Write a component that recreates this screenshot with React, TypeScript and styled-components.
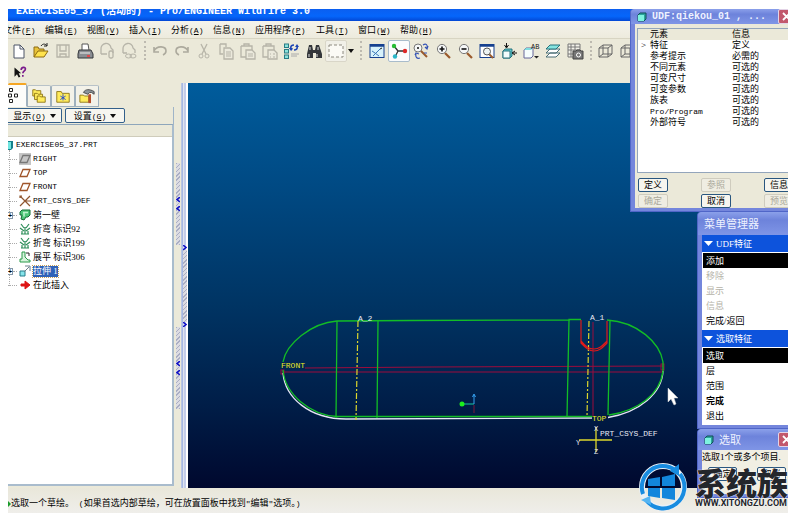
import React from "react";
import styled, { createGlobalStyle, css } from "styled-components";

const Global = createGlobalStyle`
  * { box-sizing: border-box; }
  body { margin: 0; background: #fff; overflow: hidden; }
  button { font: inherit; color: inherit; border: 0; background: none; padding: 0; margin: 0; }
  ul { list-style: none; margin: 0; padding: 0; }
  h2, h3, p { margin: 0; font-size: inherit; font-weight: inherit; }
`;

const latin = `"Liberation Mono", "Noto Sans CJK SC", monospace`;
const cjk = `"Liberation Serif", "Noto Sans CJK SC", serif`;

const Page = styled.div`
  height: 100vh;
  padding: 9px 0 2px 8px;
  overflow: hidden;
`;
const Shell = styled.div`
  position: relative;
  height: 100%;
  display: flex;
  flex-direction: column;
  overflow: hidden;
  background: #ebe9d9;
  color: #000;
  font: 9px/14px ${cjk};
  white-space: nowrap;
`;
const Mono = styled.span`
  font: 8px/1 ${latin};
`;

/* ---------- title, menus, toolbars ---------- */
const TitleBar = styled.header`
  flex: none;
  height: 12px;
  padding-left: 8px;
  overflow: hidden;
  background: linear-gradient(#0b5ff0, #0566fb 60%, #0347d4);
  color: #fff;
  font: bold 10px/6px ${latin};
`;
const MenuBar = styled.nav`
  flex: none;
  display: flex;
  height: 18px;
  margin-left: -5px;
  background: linear-gradient(#f4f3ec, #edebdd);
  border-bottom: 1px solid #d8d5c3;
`;
const MenuItem = styled.button<{ $wide?: boolean }>`
  min-width: ${(p) => (p.$wide ? 61 : 42)}px;
  text-align: left;
  line-height: 16px;
`;
const Toolbar = styled.div`
  flex: none;
  display: flex;
  align-items: center;
  height: 23px;
  overflow: hidden;
`;
const HelpBar = styled(Toolbar)`
  height: 21px;
`;
const Tool = styled.button<{ $on?: boolean; $soft?: boolean }>`
  flex: none;
  display: grid;
  place-items: center;
  width: 22px;
  height: 22px;
  border-radius: 2px;
  ${(p) => p.$on && css`background: #fbfcfd; border: 1px solid #a9bccb;`}
  ${(p) => p.$soft && css`background: #f1f0e8; border: 1px solid #d9d6c8;`}
  &:disabled { opacity: 0.75; }
`;
const Caret = styled.button`
  flex: none;
  width: 8px;
  height: 22px;
  display: grid;
  place-items: center;
`;
const Separator = styled.i<{ $w: number }>`
  flex: none;
  width: ${(p) => p.$w}px;
  height: 19px;
  display: flex;
  justify-content: center;
  &::before { content: ""; border-left: 2px dotted #bdbab0; }
`;

/* ---------- body ---------- */
const Body = styled.main`
  flex: 1;
  min-height: 0;
  display: flex;
`;
const Side = styled.aside`
  flex: none;
  width: 166px;
  display: flex;
  flex-direction: column;
  padding-bottom: 2px;
`;
const Tabs = styled.div`
  flex: none;
  display: flex;
  height: 24px;
`;
const Tab = styled.button<{ $on?: boolean }>`
  width: ${(p) => (p.$on ? 19 : 24)}px;
  margin-top: ${(p) => (p.$on ? 0 : 2)}px;
  display: grid;
  place-items: center;
  background: ${(p) => (p.$on ? "#fcfcfa" : "#f3f2e9")};
  border: 1px solid #9fb0bd;
  border-left-width: ${(p) => (p.$on ? 0 : 1)}px;
  border-top: ${(p) => (p.$on ? "2px solid #f5a623" : "1px solid #b8c2c8")};
  border-bottom-color: ${(p) => (p.$on ? "#fcfcfa" : "#9fb0bd")};
  border-radius: 2px 2px 0 0;
`;
const TreeTools = styled.div`
  flex: none;
  display: flex;
  gap: 3px;
  height: 17px;
  padding-top: 1px;
  border-right: 1px solid #9fb4c8;
`;
const DropButton = styled.button<{ $first?: boolean }>`
  display: flex;
  align-items: center;
  justify-content: center;
  gap: 4px;
  width: ${(p) => (p.$first ? 54 : 60)}px;
  height: 15px;
  background: #f7f6f0;
  border: 1px solid #33608b;
  border-left-width: ${(p) => (p.$first ? 0 : 1)}px;
  border-radius: ${(p) => (p.$first ? "0 2px 2px 0" : "2px")};
`;
const TreePane = styled.section`
  flex: 1;
  min-height: 0;
  background: #fff;
  border: 1px solid #8ea6bb;
  border-left: 0;
  border-right: 2px solid #a9bccd;
  border-bottom: 2px solid #a9bccd;
`;
const TreeHead = styled.div`
  height: 12px;
  background: #ebe9d9;
  border-bottom: 1px solid #cfccbb;
  margin-bottom: 1px;
`;
const TreeList = styled.ul`
  position: relative;
  &::before {
    content: "";
    position: absolute;
    left: 1px;
    top: 12px;
    bottom: 6px;
    border-left: 1px dotted #aaa;
  }
`;
const TreeRow = styled.li`
  position: relative;
  height: 14px;
  display: flex;
  align-items: center;
  gap: 2px;
  > svg { flex: none; }
`;
const Branch = styled.span`
  width: 9px;
  display: flex;
  align-items: center;
  &::after { content: ""; flex: 1; border-top: 1px dotted #aaa; }
`;
const Plus = styled.button`
  width: 5px;
  height: 7px;
  border: 1px solid #8496a8;
  border-left: 0;
  background: #fff;
  font: bold 7px/5px "Liberation Sans", sans-serif;
`;
const Name = styled.span<{ $sel?: boolean }>`
  line-height: 11px;
  ${(p) => p.$sel && css`background: #2f62b8; color: #fff; outline: 1px dotted #c7a05a;`}
`;

const Sash = styled.div`
  flex: none;
  display: flex;
  width: 14px;
`;
const SashCol = styled.div<{ $inner?: boolean }>`
  width: ${(p) => (p.$inner ? 6 : 8)}px;
  display: flex;
  flex-direction: column;
  align-items: center;
  padding-top: ${(p) => (p.$inner ? 162 : 80)}px;
  gap: ${(p) => (p.$inner ? 0 : 82)}px;
  ${(p) =>
    p.$inner
      ? css`background: linear-gradient(90deg, #a6b8e2 1px, #dfe3ee 1px 2px, #c3cdea 2px 4px, #fff 4px);`
      : css`border-right: 1px solid #b9c6e2;`}
`;
const Grip = styled.div<{ $h: number }>`
  flex: none;
  width: 4px;
  height: ${(p) => p.$h}px;
  display: flex;
  flex-direction: column;
  align-items: center;
  justify-content: center;
  gap: 4px;
  background: repeating-linear-gradient(135deg, #aaaec4 0 1px, #dcdce2 1px 3px);
`;

const Canvas = styled.section`
  flex: 1;
  min-width: 0;
  background: linear-gradient(#005c9c, #004a84 25%, #003463 55%, #001d47 80%, #00082e);
  > svg { display: block; width: 100%; height: 100%; }
`;
const Status = styled.footer`
  flex: none;
  height: 25px;
  padding-top: 8px;
  display: flex;
  align-items: flex-start;
  background: linear-gradient(#e9e7da, #efeeea);
  line-height: 15px;
`;

/* ---------- floating windows ---------- */
const Float = styled.div`
  position: absolute;
  top: 0;
  right: -10px;
  display: flex;
  flex-direction: column;
  align-items: flex-end;
`;
const Dialog = styled.section<{ $w: number }>`
  width: ${(p) => p.$w}px;
  padding: 0 4px 3px;
  background: #7486dc;
  border-left: 1px solid #5066c8;
  border-bottom: 1px solid #5066c8;
  border-radius: 4px 4px 0 0;
`;
const DialogTitle = styled.h2<{ $h: number; $mono?: boolean }>`
  display: flex;
  align-items: center;
  gap: 5px;
  height: ${(p) => p.$h}px;
  margin: 0 -4px;
  padding: 0 3px 0 6px;
  background: linear-gradient(#8ba0ea, #6d83db 35%, #7f95e6);
  border-radius: 4px 4px 0 0;
  color: #eef2ff;
  font: ${(p) => (p.$mono ? `bold 10px/10px ${latin}` : `11px/14px ${cjk}`)};
  > svg { flex: none; }
`;
const Close = styled.button`
  margin-left: auto;
  width: 17px;
  height: 15px;
  display: grid;
  place-items: center;
  background: #c2586c;
  border: 1px solid #e3d3e6;
  border-radius: 2px;
`;
const Face = styled.div`
  background: #ebe9d9;
  padding: 4px 0 0 2px;
`;
const ElementBox = styled.div`
  height: 145px;
  background: #fff;
  border: 1px solid #93a5bb;
`;
const ElementTable = styled.table`
  width: 100%;
  border-collapse: collapse;
  line-height: 11px;
  th { background: #ebe9d9; font-weight: normal; text-align: left; padding: 0; }
  td { padding: 0; }
  th:first-child, td:first-child { width: 12px; padding-left: 3px; }
  th:nth-child(2), td:nth-child(2) { width: 82px; }
`;
const ButtonGrid = styled.div`
  display: grid;
  grid-template-columns: repeat(3, 30px);
  justify-content: space-between;
  gap: 2px 0;
  padding: 5px 0 0 1px;
`;
const Push = styled.button`
  height: 14px;
  border: 1px solid #29567f;
  border-radius: 2px;
  background: #f6f5ef;
  line-height: 12px;
  &:disabled { color: #aaa89a; border-color: #cfccbe; background: #efede2; }
`;
const MenuHead = styled.h3`
  display: flex;
  align-items: center;
  gap: 3px;
  height: 17px;
  padding-left: 2px;
  background: #0d53dc;
  color: #fff;
`;
const MenuList = styled.ul`
  background: #fff;
  padding: 1px 0 2px 1px;
`;
const MenuEntry = styled.button<{ $sel?: boolean; $bold?: boolean }>`
  display: block;
  width: 100%;
  height: 15px;
  padding-left: 3px;
  text-align: left;
  line-height: 14px;
  font-weight: ${(p) => (p.$bold ? "bold" : "normal")};
  ${(p) => p.$sel && css`background: #000; color: #fff;`}
  &:disabled { color: #b5b3a8; }
`;
const SelectFace = styled.div`
  height: 44px;
  background: #f1efe3;
`;
const SelectButtons = styled.div`
  display: grid;
  grid-template-columns: 29px 29px;
  gap: 20px;
  padding: 3px 6px;
`;
const Brand = styled.a`
  position: absolute;
  right: 0;
  bottom: 1px;
  display: flex;
  align-items: flex-end;
  gap: 8px;
  color: #24262b;
  text-decoration: none;
  text-shadow: 0 0 1px #fff, 0 0 1px #fff;
`;
const BrandText = styled.span`
  display: flex;
  flex-direction: column;
  padding-bottom: 4px;
  font: bold 9px/10px Roboto, sans-serif;
`;
const BrandName = styled.span`
  font: 900 31px/32px "Noto Sans CJK SC", sans-serif;
`;

/* ---------- drawings ---------- */
const S = ({ children, s = 18, v = 18 }: { children: React.ReactNode; s?: number; v?: number }) => (
  <svg width={s} height={s} viewBox={`0 0 ${v} ${v}`} fill="none" aria-hidden="true">{children}</svg>
);
const g = "#a5a398";
const Glass = ({ sign }: { sign: string }) => (
  <S>
    <path d="M11 11l5 5" stroke="#9a5a2c" strokeWidth="2.2" />
    <circle cx="8" cy="7" r="4.6" fill="#f5f7f7" stroke="#777" />
    <path d={sign} stroke="#111" strokeWidth="1.6" />
  </S>
);
const Sheets = () => (
  <S>
    <path d="M3 2h6v3M3 2v10h3" stroke={g} strokeWidth="1.300" />
    <path d="M7 6h6l3 3v8H7z" fill="#eceade" stroke={g} strokeWidth="1.300" />
    <path d="M9 10h5M9 12h5M9 14h5" stroke={g} />
  </S>
);
const Paste = ({ x }: { x?: boolean }) => (
  <S>
    <path d="M2 4h11v4M2 4v11h5M5 4V2h5v2" stroke={g} strokeWidth="1.300" />
    <path d="M7 8h6l3 3v6H7z" fill="#eceade" stroke={g} strokeWidth="1.300" />
    <path d={x ? "M9 12h1m2 0h2M9 15h1m2 0h2" : "M9 12h5M9 14h5"} stroke={g} />
  </S>
);
const Icons: Record<string, React.ReactNode> = {
  new: <S><path d="M4 3h6l4 4v9H4z" fill="#fff" stroke="#4c5566" /><path d="M10 3v4h4" stroke="#4c5566" /></S>,
  open: <S><path d="M2 15V5h4l1 2h5v3" fill="#e8c23a" stroke="#8c6b12" /><path d="M2 15l4-6h10l-4 6z" fill="#ffe34d" stroke="#8c6b12" /><path d="M9 4c2-3 5-2 6 0m0-3v3h-3" stroke="#222" /></S>,
  save: <S><path d="M3 3h12v12H3z" stroke={g} strokeWidth="1.300" /><path d="M6 3v6h6V3M6 15v-3h6v3" stroke={g} strokeWidth="1.300" /></S>,
  print: <S><path d="M6 8V2h6l1 6" fill="#fff" stroke="#555" /><path d="M3 8h12l2 4v4H2v-4z" fill="#8a8d92" stroke="#33363b" /><path d="M4 11h10" stroke="#eee" /><path d="M11 14h3" stroke="#f33" strokeWidth="1.5" /></S>,
  mail: <S><path d="M3 12V7a5 5 0 0110-1l2 2v3M3 12h6" stroke={g} strokeWidth="1.300" /><rect x="11" y="9" width="4" height="7" rx="1.5" stroke={g} strokeWidth="1.300" /></S>,
  link: <S><path d="M3 11V7a5 5 0 0110-1l2 2v3M3 11h4" stroke={g} strokeWidth="1.300" /><ellipse cx="8.500" cy="14" rx="3" ry="2" stroke={g} /><ellipse cx="13" cy="14" rx="3" ry="2" stroke={g} /></S>,
  undo: <S><path d="M3 5v5h5M3 9c3-6 12-5 12 0 0 2-1 3-3 4" stroke="#98958a" strokeWidth="1.6" /></S>,
  redo: <S><path d="M15 5v5h-5M15 9c-3-6-12-5-12 0 0 2 1 3 3 4" stroke="#98958a" strokeWidth="1.6" /></S>,
  cut: <S><path d="M6 2l5 10M12 2L7 12" stroke={g} strokeWidth="1.3" /><circle cx="6" cy="14" r="2" stroke={g} /><circle cx="12" cy="14" r="2" stroke={g} /></S>,
  copy: <Sheets />,
  paste: <Paste />,
  special: <Paste x />,
  regen: <S><g fill="#8be3dc" stroke="#2a7b84"><rect x="1.500" y="2" width="4" height="3.500" /><rect x="1.500" y="7.500" width="4" height="3.500" /><rect x="1.500" y="13" width="4" height="3.500" /></g><path d="M8 7c-1-3 1-4 3-4M9 8L7 6m2-3" stroke="#1d45b4" strokeWidth="1.600" /><path d="M6 6h4L8 9zM12 5h4l-2-3z" fill="#1d45b4" /><path d="M14 4c1 3-1 4-3 4" stroke="#1d45b4" strokeWidth="1.600" /><path d="M8 12h8M8 14h6" stroke="#aaa" /></S>,
  find: <S><path d="M4 3h3l1 5h2l1-5h3l3 9v4h-6v-5H8v5H2v-4z" fill="#33363a" /><path d="M4 12v3m8-3v3M5 5v3m8-3v3" stroke="#ddd" /></S>,
  select: <S><rect x="2" y="3" width="14" height="12" fill="#fbfaf5" stroke="#8d8a80" strokeDasharray="3 2" /></S>,
  sketch: <S><rect x="2" y="2.500" width="14" height="13" fill="#d7f2fb" stroke="#16408f" /><path d="M2 3.500h14" stroke="#16408f" strokeWidth="2.500" /><path d="M5 14l7-7M4 9l3 2 4 3" stroke="#3b77b8" /><path d="M12 7l2-1" stroke="#222" /></S>,
  spin: <S><path d="M4 4l4 5h8M8 9l-3 6" stroke="#333" strokeWidth="1.300" /><circle cx="4" cy="4" r="2.200" fill="#27bd35" /><circle cx="15" cy="9" r="2.200" fill="#dd2828" /><circle cx="5" cy="14.500" r="2.200" fill="#2bb7c8" /></S>,
  orient: <S><circle cx="6" cy="6" r="4" fill="#f5f7f7" stroke="#777" /><path d="M9 9l6 6" stroke="#9a5a2c" strokeWidth="2" /><path d="M11 3c3-2 5 0 4 3m-2-1l2 2 1-3M4 12c-1 3 1 5 4 4m-5-3l1-2 3 1M12 11h3" stroke="#3352b5" strokeWidth="1.200" /><path d="M5 6h2M6 5v2" stroke="#111" /></S>,
  zin: <Glass sign="M5.500 7h5M8 4.500v5" />,
  zout: <Glass sign="M5.500 7h5" />,
  refit: <S><rect x="2" y="2.500" width="14" height="13" fill="#fff" stroke="#16408f" /><path d="M2 3.500h14" stroke="#16408f" strokeWidth="2.500" /><path d="M11 12l4 4" stroke="#9a5a2c" strokeWidth="2" /><circle cx="9" cy="9.500" r="3.500" fill="#eef4f4" stroke="#555" /></S>,
  views: <S><path d="M3 9l2-2h7v7l-2 2H3z" fill="#5ec6cc" stroke="#26727c" /><path d="M3 9h7v7H3z" fill="#f2fcfc" stroke="#26727c" /><path d="M6.500 1v4M4.500 3l2 3 2-3M17 11h-4m2-2l-3 2 3 2" stroke="#111" /></S>,
  named: <S><path d="M2 8l2-2h7v8l-2 2H2z" fill="#f5fdfd" stroke="#669" /><path d="M2 8l2-2h7l-2 2z" fill="#7fdde0" /><text x="9" y="7" fontSize="7" fontFamily="Liberation Mono, monospace" fill="#222">AB</text><path d="M12 14h5l-2.500 2.500z" fill="#222" /></S>,
  layers: <S><path d="M2 15l4-4h10l-4 4zM2 11l4-4h10l-4 4z" fill="#fff" stroke="#4b6f77" /><path d="M2 7l4-4h10l-4 4z" fill="#84e4e0" stroke="#26727c" /></S>,
  table: <S><path d="M2 2h12v13H2zM5 2v13M9 2v6M2 5h12M2 8h12M2 12h5" fill="#f3f2ea" stroke="#777" /><path d="M7 9h3l1-1h3l1 1h2v8H7z" fill="#777" stroke="#444" /><circle cx="12.500" cy="13" r="2" stroke="#fff" /></S>,
  wire: <S><path d="M2 6h9v9H2zM6 3h9v9H6zM2 6l4-3M11 6l4-3M11 15l4-3M2 15l4-3" stroke="#666" /></S>,
};
const Arrow = ({ c = "#111", big }: { c?: string; big?: boolean }) => (
  <svg width={big ? 9 : 6} height={big ? 5 : 4} viewBox="0 0 6 4" preserveAspectRatio="none" aria-hidden="true"><path d="M0 0h6L3 4z" fill={c} /></svg>
);
const Chevron = ({ right }: { right?: boolean }) => (
  <svg width="4" height="5" viewBox="0 0 4 5" fill="none" aria-hidden="true">
    <path d={right ? "M0 0l3 2.500-3 2.500" : "M4 0L1 2.500 4 5"} stroke="#1010c8" strokeWidth="1.500" />
  </svg>
);
const WinIcon = () => (
  <S s={10} v={10}><path d="M1 3l2-2h6v6L7 9H1z" fill="#2ca59d" stroke="#124f58" /><path d="M1 3h6v6H1z" fill="#7df2df" /></S>
);
const Cross = () => <S s={9} v={9}><path d="M1 1l7 7M8 1L1 8" stroke="#fff" strokeWidth="1.800" /></S>;
const Folder = ({ x = 0, y = 0 }) => (
  <path transform={`translate(${x} ${y})`} d="M0 8V1h3l1 1h5v6z" fill="#ffec5c" stroke="#8c7414" />
);
const plane = (c: string, bg?: string) => (
  <S s={12} v={12}>{bg && <path d="M0 0h12v12H0z" fill={bg} />}<path d="M4 2.500h7L8 9.500H1z" stroke={c} strokeWidth="1.300" /></S>
);
const bend = (
  <S s={12} v={12}><path d="M2 1l3 4M10 1L7 5M1 5l4 3M11 5L7 8M6 4v7M2 11h8M3 8v3M9 8v3" stroke="#2f8f5b" strokeWidth="1.200" /></S>
);
const TI: Record<string, React.ReactNode> = {
  datumSel: plane("#777", "#c5c5c5"),
  datum: plane("#a0552a"),
  csys: <S s={12} v={12}><path d="M1 1l10 10M11 1L1 11M6 6h6M1 3V1h2" stroke="#8f5630" strokeWidth="1.200" /></S>,
  wall: <S s={12} v={12}><path d="M1 3l2-2h8v5L9 8H7l-2 3-3-1 1-4H1z" fill="#4fc878" stroke="#186c38" /><path d="M4 3.500h5M5 3.500v4" stroke="#bff2cd" strokeWidth="1.500" /></S>,
  bend,
  flat: <S s={12} v={12}><path d="M3 1h3v5l3 3h2v2H1V8h2z" fill="#d6f3dc" stroke="#2b9a4a" /><path d="M7 2h3v3" stroke="#222" /></S>,
  extrude: <S s={12} v={12}><path d="M1 6h5v5H1z" fill="#86e4ea" stroke="#267e8c" /><path d="M5 7l5-5M6 1h5v5" stroke="#6b7f8b" /></S>,
  insert: <S s={12} v={12}><path d="M2 5h4V2l5 4-5 4V7H2z" fill="#dd1515" stroke="#dd1515" /></S>,
};

/* ---------- data ---------- */
const menus: [string, string][] = [
  ["文件", "F"], ["编辑", "E"], ["视图", "V"], ["插入", "I"], ["分析", "A"], ["信息", "N"],
  ["应用程序", "P"], ["工具", "T"], ["窗口", "W"], ["帮助", "H"],
];
const tree: { icon: string; cjk?: string; latin?: string; plus?: boolean; sel?: boolean }[] = [
  { icon: "datumSel", latin: "RIGHT" },
  { icon: "datum", latin: "TOP" },
  { icon: "datum", latin: "FRONT" },
  { icon: "csys", latin: "PRT_CSYS_DEF" },
  { icon: "wall", cjk: "第一壁", plus: true },
  { icon: "bend", cjk: "折弯 标识92" },
  { icon: "bend", cjk: "折弯 标识199" },
  { icon: "flat", cjk: "展平 标识306" },
  { icon: "extrude", cjk: "拉伸 1", plus: true, sel: true },
  { icon: "insert", cjk: "在此插入" },
];
const elements = [
  ["特征", "定义"], ["参考提示", "必需的"], ["不同元素", "可选的"], ["可变尺寸", "可选的"],
  ["可变参数", "可选的"], ["族表", "可选的"], ["Pro/Program", "可选的"], ["外部符号", "可选的"],
];
const disabled = new Set(["save", "mail", "link", "undo", "redo", "cut", "copy", "paste", "special"]);
const Tools = ({ names }: { names: string[] }) => (
  <>
    {names.map((n, i) => (
      <Tool key={i} aria-label={n} disabled={disabled.has(n)} $on={n === "spin"} $soft={n === "select"}>{Icons[n]}</Tool>
    ))}
  </>
);
const Key = ({ k }: { k: string }) => <Mono>(<u>{k}</u>)</Mono>;

const Model = () => (
  <svg viewBox="188 83 600 405" preserveAspectRatio="xMinYMin meet" fill="none" role="img" aria-label="EXERCISE05_37">
    <g stroke="#9c0c3c">
      <path d="M305 368l125-1 233-1M282 372h381M593 322v94" />
      <rect x="281" y="370" width="3" height="4" /><rect x="661" y="364" width="3" height="6" />
    </g>
    <g stroke="#e4e6f4" strokeWidth="1.300">
      <path d="M283 373C285 398 310 419 346 419L592 418M608 417.500C640 412 662 393 663 371" />
    </g>
    <g stroke="#12bd26" strokeWidth="1.300">
      <path d="M283 362C286 344 311 323 337 321L410 320.500 569 320V319.500H581M283 370C285 394 310 415 337 416.500H592" />
      <path d="M607 320C638 322 660 343 663 362V371C660 395 637 411 609 415" />
      <path d="M337 321L336 418M378 321L377 418M569 320L567 417M610 321L608 415" />
    </g>
    <g stroke="#dcd62c" strokeWidth="1.200" strokeDasharray="6 2 2 2">
      <path d="M358 321L356 420M589 321L587 417" />
    </g>
    <path d="M581 320V343C586 348 589 351 594 351 600 351 603 347 607 343V321M581 341C586 347 589 349 594 349 600 349 603 345 607 341" stroke="#e01a1a" strokeWidth="1.200" />
    <path d="M462 404h12" stroke="#18c8a0" /><circle cx="462" cy="404" r="2.500" fill="#1cf01c" />
    <path d="M474 404v-9m-1.500 2l1.500-3 1.500 3" stroke="#35a0f0" /><path d="M474 405v8" stroke="#7c1838" />
    <path d="M596 427v25M579 440h33" stroke="#dcd62c" strokeWidth="1.300" />
    <g fontFamily="Liberation Mono, monospace" fontSize="8" fill="#e8eaf4">
      <text x="358" y="321">A_2</text><text x="590" y="320">A_1</text>
      <text x="600" y="436">PRT_CSYS_DEF</text>
      <text x="576" y="445" fontSize="7">Y</text><text x="594" y="431" fontSize="7">X</text><text x="594" y="454" fontSize="7">Z</text>
      <g fill="#eeea22"><text x="281" y="368">FRONT</text><text x="592" y="421">TOP</text></g>
    </g>
    <path d="M668 388v14l3-3 3 6 2-1-2-6h4z" fill="#fff" stroke="#ccc" strokeWidth=".5" />
  </svg>
);

const WinLogo = () => (
  <svg width="48" height="50" viewBox="0 0 48 50" fill="none" aria-hidden="true">
    <circle cx="24" cy="25" r="21" stroke="#e9f0f6" strokeWidth="6" />
    <path d="M7 38A21 21 0 0041 12" stroke="#188ce0" strokeWidth="4" />
    <path d="M4 32A21 21 0 0136 8" stroke="#188ce0" strokeWidth="4" />
    <path d="M31 9l9-7v12z" fill="#188ce0" />
    <path d="M2 38l9-4 1 9z" fill="#54b4f2" />
    <path d="M9 17l12-2v9H9zM23 15l13-3v12H23zM9 26h12v10L9 34zM23 26h13v12l-13-2z" fill="#1286dc" />
  </svg>
);

export default function App() {
  return (
    <Page>
      <Global />
      <Shell>
        <TitleBar>EXERCISE05_37 (活动的) - Pro/ENGINEER Wildfire 3.0</TitleBar>
        <MenuBar>
          {menus.map(([t, k]) => <MenuItem key={k} $wide={t.length > 2}>{t}<Key k={k} /></MenuItem>)}
        </MenuBar>
        <Toolbar>
          <Tools names={["new", "open", "save", "print", "mail", "link"]} />
          <Separator $w={9} />
          <Tools names={["undo", "redo", "cut", "copy", "paste", "special", "regen", "find", "select"]} />
          <Caret aria-label="selection options"><Arrow /></Caret>
          <Separator $w={11} />
          <Tools names={["sketch", "spin", "orient", "zin", "zout", "refit", "views", "named", "layers", "table"]} />
          <Separator $w={9} />
          <Tools names={["wire", "wire"]} />
        </Toolbar>
        <HelpBar>
          <Tool aria-label="context help">
            <S s={15}><path d="M3 3v11l3-3 2 4 2-1-2-4h3z" fill="#111" /><path d="M11 6c0-4 6-4 5-1 0 2-3 2-3 5m0 2v2" stroke="#7a1a8c" strokeWidth="2" /></S>
          </Tool>
        </HelpBar>

        <Body>
          <Side>
            <Tabs>
              <Tab $on aria-label="model tree"><svg width="18" height="16" viewBox="0 0 18 16" fill="none" stroke="#222" aria-hidden="true"><path d="M1.500 .5h3v3h-3zM.5 6h3v3h-3zM1.500 11.500h3v3h-3zM6.500 6h3v3h-3z" /></svg></Tab>
              <Tab aria-label="folders"><S s={16}><Folder x={2} y={1} /><Folder x={4} y={5} /><Folder x={7} y={8} /></S></Tab>
              <Tab aria-label="favorites"><S s={16}><path d="M2 16V4h5l1 2h8v10z" fill="#ffec5c" stroke="#8c7414" /><path d="M9 7v7M6 9l6 4M12 9l-6 4" stroke="#1d45d4" /></S></Tab>
              <Tab aria-label="connections"><S s={16}><path d="M1 16V8h4l1 1h5v7z" fill="#ffec5c" stroke="#8c7414" /><path d="M5 5c2-4 7-4 12-1v3l-3-2h-2l-2 2z" fill="#8b959c" stroke="#444" /><path d="M12 7v10" stroke="#b5502c" strokeWidth="3" /></S></Tab>
            </Tabs>
            <TreeTools>
              <DropButton $first><span>显示<Key k="O" /></span><Arrow /></DropButton>
              <DropButton><span>设置<Key k="G" /></span><Arrow /></DropButton>
            </TreeTools>
            <TreePane>
              <TreeHead />
              <TreeList>
                <TreeRow>
                  <svg width="6" height="10" viewBox="0 0 6 10" aria-hidden="true"><path d="M0 1h5v7l-2 2H0z" fill="#16808c" /><path d="M0 2h3v7H0z" fill="#6fe6e0" /></svg>
                  <Mono>EXERCISE05_37.PRT</Mono>
                </TreeRow>
                {tree.map((r, i) => (
                  <TreeRow key={i}>
                    <Branch>{r.plus && <Plus aria-label="expand">+</Plus>}</Branch>
                    {TI[r.icon]}
                    {r.latin ? <Mono>{r.latin}</Mono> : <Name $sel={r.sel}>{r.cjk}</Name>}
                  </TreeRow>
                ))}
              </TreeList>
            </TreePane>
          </Side>

          <Sash>
            <SashCol>
              <Grip $h={82}><Chevron /><Chevron /></Grip>
              <Grip $h={82}><Chevron /><Chevron /></Grip>
            </SashCol>
            <SashCol $inner>
              <Chevron right /><Grip $h={72} /><Chevron right />
            </SashCol>
          </Sash>

          <Canvas><Model /></Canvas>
        </Body>

        <Status>
          <svg width="3" height="15" viewBox="0 0 3 15" aria-hidden="true"><path d="M0 5l3 3-3 3z" fill="#1a9a2a" /></svg>
          <p>选取一个草绘。<Mono> (</Mono>如果首选内部草绘，可在放置面板中找到<Mono>"</Mono>编辑<Mono>"</Mono>选项。<Mono>)</Mono></p>
        </Status>

        <Float>
          <Dialog $w={168}>
            <DialogTitle $h={15} $mono><WinIcon />UDF:qiekou_01 , ...<Close aria-label="关闭"><Cross /></Close></DialogTitle>
            <Face>
              <ElementBox>
                <ElementTable>
                  <thead><tr><th /><th>元素</th><th>信息</th></tr></thead>
                  <tbody>
                    {elements.map(([a, b], i) => (
                      <tr key={a}><td>{i === 0 ? ">" : ""}</td><td>{a[0] === "P" ? <Mono>{a}</Mono> : a}</td><td>{b}</td></tr>
                    ))}
                  </tbody>
                </ElementTable>
              </ElementBox>
              <ButtonGrid>
                <Push>定义</Push><Push disabled>参照</Push><Push>信息</Push>
                <Push disabled>确定</Push><Push>取消</Push><Push disabled>预览</Push>
              </ButtonGrid>
            </Face>
          </Dialog>
          <Dialog $w={101}>
            <DialogTitle $h={23}>菜单管理器</DialogTitle>
            <MenuHead><Arrow c="#fff" big />UDF特征</MenuHead>
            <MenuList>
              <li><MenuEntry $sel>添加</MenuEntry></li>
              <li><MenuEntry disabled>移除</MenuEntry></li>
              <li><MenuEntry disabled>显示</MenuEntry></li>
              <li><MenuEntry disabled>信息</MenuEntry></li>
              <li><MenuEntry>完成/返回</MenuEntry></li>
            </MenuList>
            <MenuHead><Arrow c="#fff" big />选取特征</MenuHead>
            <MenuList>
              <li><MenuEntry $sel>选取</MenuEntry></li>
              <li><MenuEntry>层</MenuEntry></li>
              <li><MenuEntry>范围</MenuEntry></li>
              <li><MenuEntry $bold>完成</MenuEntry></li>
              <li><MenuEntry>退出</MenuEntry></li>
            </MenuList>
          </Dialog>
          <Dialog $w={101}>
            <DialogTitle $h={21}><WinIcon />选取<Close aria-label="关闭"><Cross /></Close></DialogTitle>
            <SelectFace>
              <p>选取1个或多个项目.</p>
              <SelectButtons><Push>确定</Push><Push>取消</Push></SelectButtons>
            </SelectFace>
          </Dialog>
        </Float>

        <Brand href="#">
          <WinLogo />
          <BrandText><BrandName>系统族</BrandName>WWW.XITONGZU.COM</BrandText>
        </Brand>
      </Shell>
    </Page>
  );
}
